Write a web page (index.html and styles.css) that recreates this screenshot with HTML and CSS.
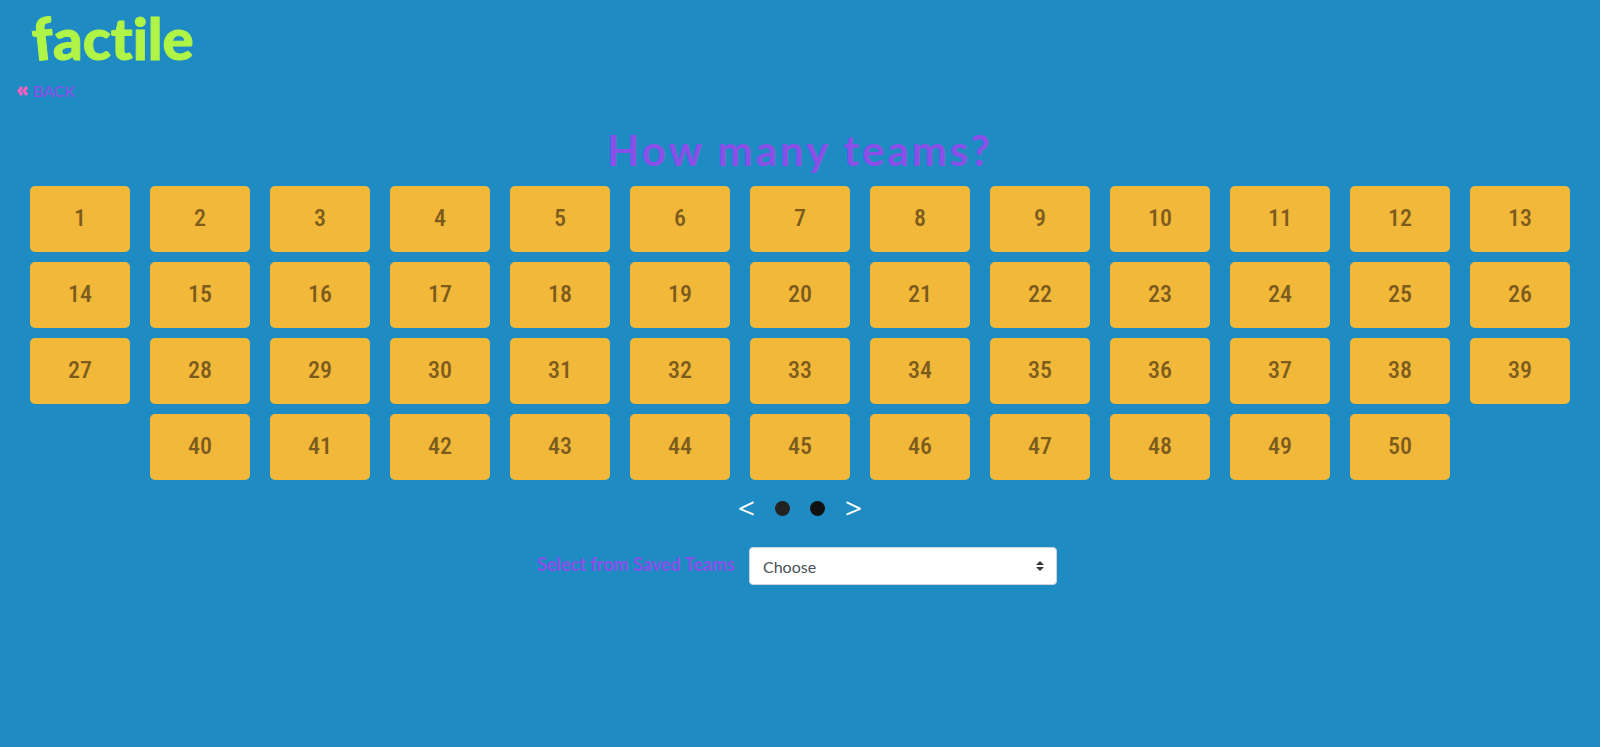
FILE: index.html
```html
<!DOCTYPE html>
<html lang="en">
<head>
<meta charset="utf-8">
<title>Factile</title>
<link rel="stylesheet" href="styles.css">
</head>
<body>
<header class="header">
  <a class="logo" href="#" aria-label="factile"><span class="logo-f">f</span>actile</a>
</header>
<nav class="back-nav">
  <a class="back" href="#"><svg class="back-icon" width="12" height="10" viewBox="0 0 12 10" aria-hidden="true"><path d="M5 1 2 5l3 4M10 1 7 5l3 4"/></svg>BACK</a>
</nav>
<main>
  <h1 class="title">How many teams?</h1>
  <div class="teams">
    <button class="team">1</button><button class="team">2</button><button class="team">3</button><button class="team">4</button><button class="team">5</button><button class="team">6</button><button class="team">7</button><button class="team">8</button><button class="team">9</button><button class="team">10</button>
    <button class="team">11</button><button class="team">12</button><button class="team">13</button><button class="team">14</button><button class="team">15</button><button class="team">16</button><button class="team">17</button><button class="team">18</button><button class="team">19</button><button class="team">20</button>
    <button class="team">21</button><button class="team">22</button><button class="team">23</button><button class="team">24</button><button class="team">25</button><button class="team">26</button><button class="team">27</button><button class="team">28</button><button class="team">29</button><button class="team">30</button>
    <button class="team">31</button><button class="team">32</button><button class="team">33</button><button class="team">34</button><button class="team">35</button><button class="team">36</button><button class="team">37</button><button class="team">38</button><button class="team">39</button><button class="team">40</button>
    <button class="team">41</button><button class="team">42</button><button class="team">43</button><button class="team">44</button><button class="team">45</button><button class="team">46</button><button class="team">47</button><button class="team">48</button><button class="team">49</button><button class="team">50</button>
  </div>
  <div class="pager">
    <button class="arrow" aria-label="Previous">&lt;</button>
    <button class="dot dot-active" aria-label="Page 1"></button>
    <button class="dot" aria-label="Page 2"></button>
    <button class="arrow" aria-label="Next">&gt;</button>
  </div>
  <div class="saved">
    <label class="saved-label" for="saved-teams">Select from Saved Teams</label>
    <div class="select-box">
      <select class="select" id="saved-teams"><option>Choose</option></select>
      <svg class="select-icon" width="8" height="10" viewBox="0 0 8 10" aria-hidden="true"><path d="M4 0 0 4h8zM4 10 0 6h8z"/></svg>
    </div>
  </div>
</main>
</body>
</html>
```
FILE: styles.css
```css
* {
  box-sizing: border-box;
}

body {
  margin: 0;
  min-height: 100vh;
  background: #1f8bc3;
  color: #8a4fe8;
  font-family: Lato, "Liberation Sans", sans-serif;
  font-size: 16px;
}

button {
  padding: 0;
  border: 0;
  font: inherit;
  cursor: pointer;
}

.header {
  padding: 4px 32px 0;
}

.logo {
  display: inline-block;
  color: #b0f447;
  font-size: 58px;
  font-weight: 900;
  font-variant-ligatures: none;
  line-height: 68px;
  text-decoration: none;
  -webkit-text-stroke: 1px #b0f447;
}

.logo-f {
  display: inline-block;
  transform: rotate(-6deg);
}

.back-nav {
  padding: 8px 17px 0;
}

.back {
  display: inline-flex;
  align-items: center;
  gap: 4px;
  color: #8a4fe8;
  font-weight: 500;
  line-height: 20px;
  text-decoration: none;
}

.back-icon {
  fill: none;
  stroke: #ff5cc0;
  stroke-width: 3;
}

.title {
  margin: 25px 0 12px;
  font-size: 42px;
  font-weight: 700;
  letter-spacing: 3px;
  line-height: 48px;
  text-align: center;
}

.teams {
  display: flex;
  flex-wrap: wrap;
  justify-content: center;
  gap: 10px 20px;
  padding: 0 20px;
}

.team {
  width: 100px;
  height: 66px;
  padding-bottom: 3px;
  border-radius: 5px;
  background: #f2b83a;
  color: #7c5c1c;
  font-family: "Roboto Condensed", "Open Sans Condensed", Roboto, sans-serif;
  font-size: 24px;
  font-weight: 500;
}

.pager {
  display: flex;
  align-items: center;
  justify-content: center;
  gap: 20px;
  margin-top: 13px;
}

.arrow {
  background: none;
  color: #fff;
  font-family: "Open Sans", sans-serif;
  font-size: 30px;
  line-height: 30px;
}

.dot {
  width: 15px;
  height: 15px;
  border-radius: 50%;
  background: #111;
}

.dot-active {
  background: #222;
}

.saved {
  display: flex;
  align-items: center;
  justify-content: center;
  gap: 14px;
  margin-top: 24px;
  padding-right: 6px;
}

.saved-label {
  padding-bottom: 4px;
  font-size: 18px;
  font-weight: 700;
}

.select-box {
  position: relative;
  width: 308px;
}

.select {
  width: 100%;
  height: 38px;
  padding: 0 28px 0 13px;
  border: 1px solid #ced4da;
  border-radius: 4px;
  appearance: none;
  background: #fff;
  color: #495057;
  font: inherit;
}

.select-icon {
  position: absolute;
  top: 14px;
  right: 13px;
  fill: #343a40;
  pointer-events: none;
}
```
